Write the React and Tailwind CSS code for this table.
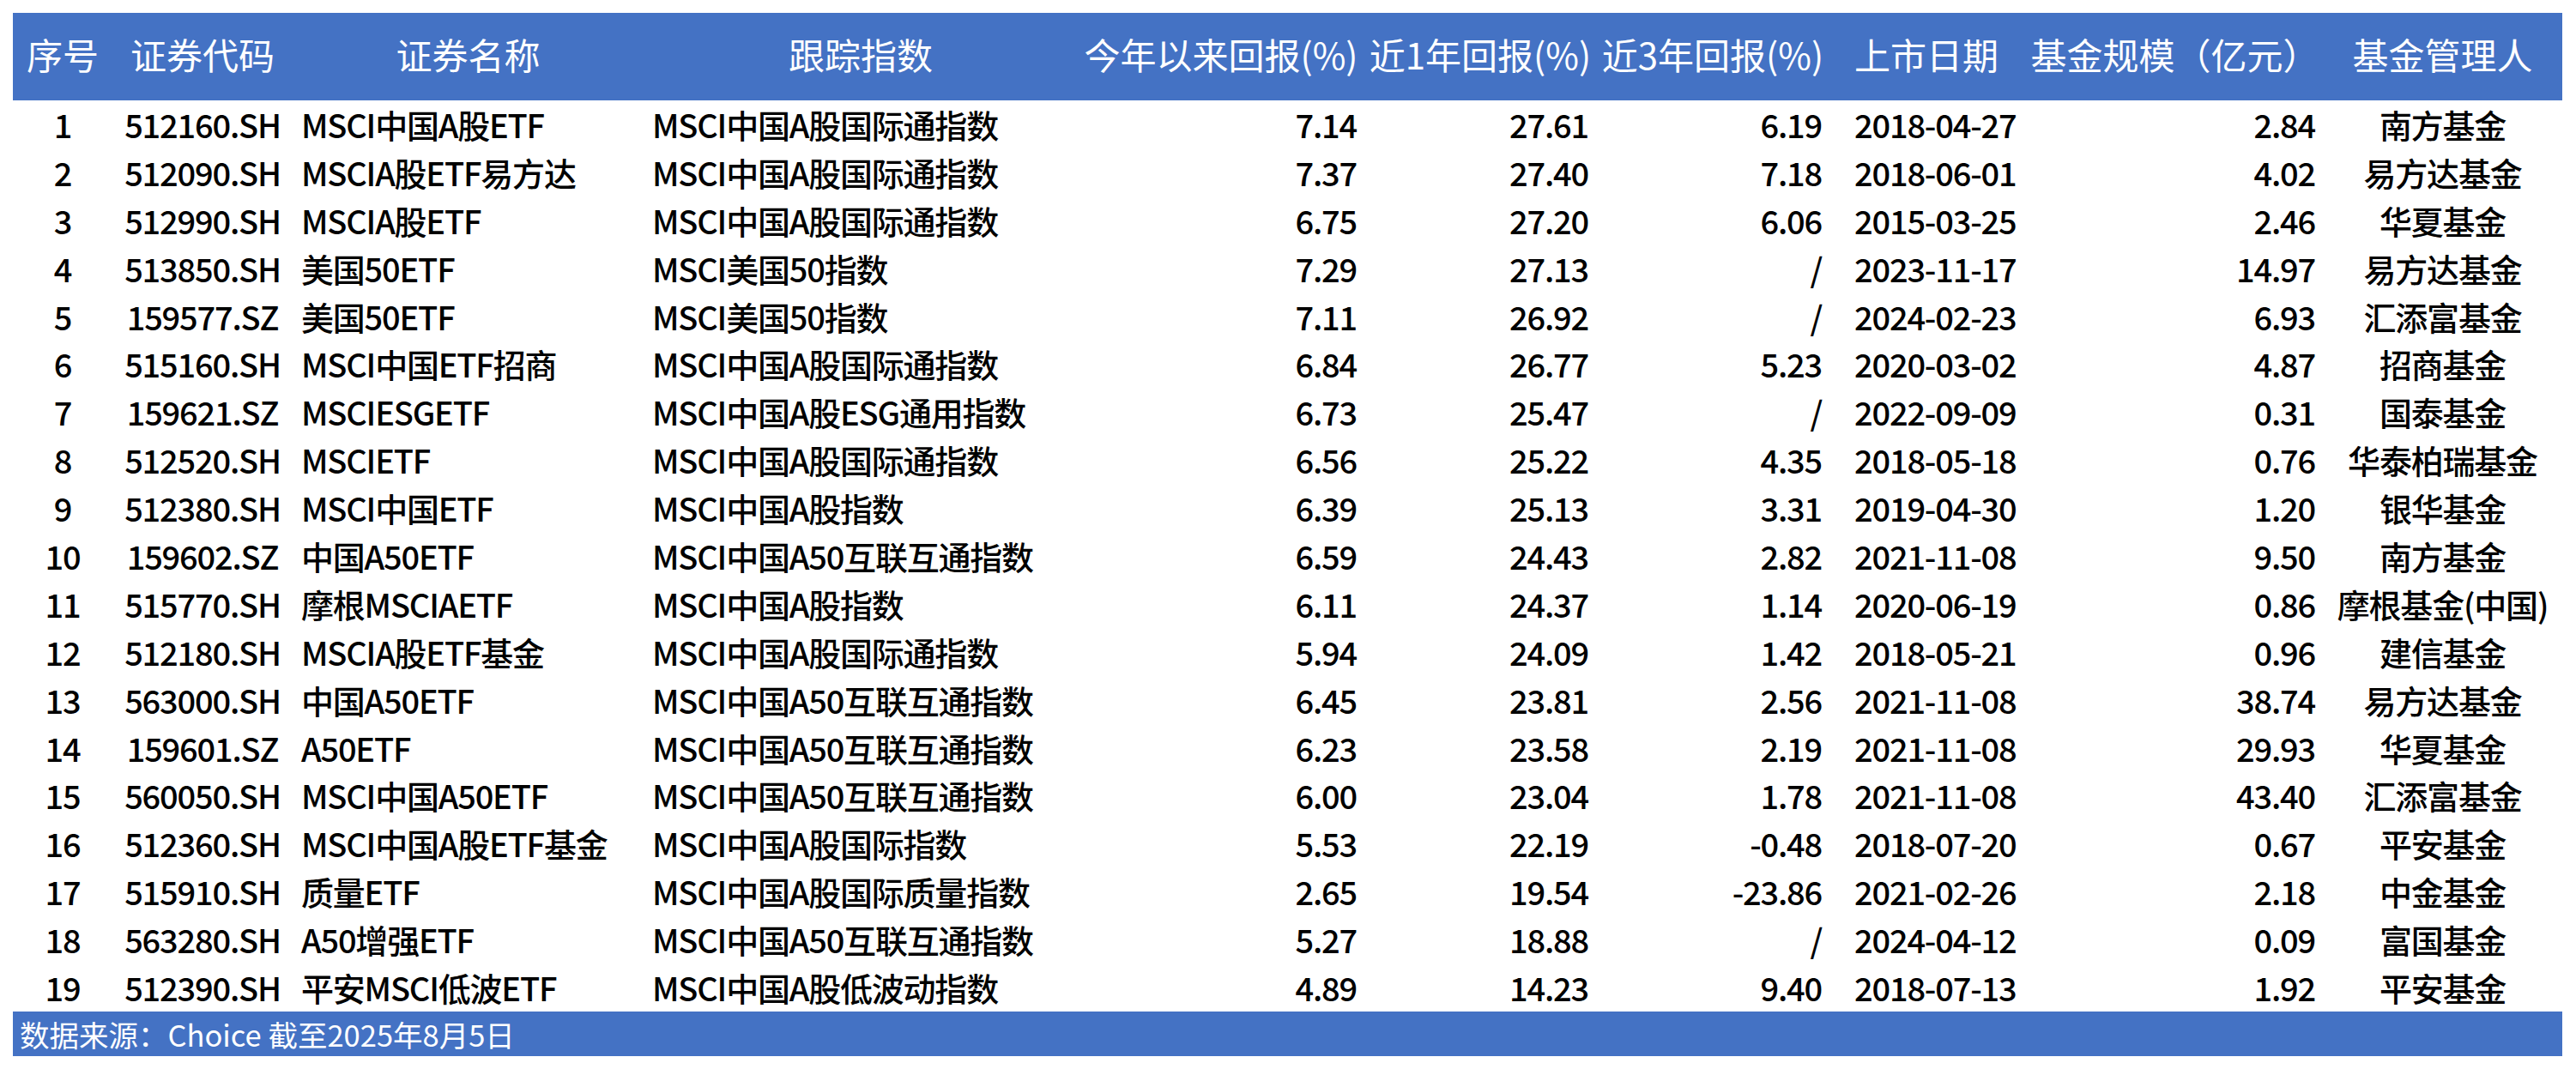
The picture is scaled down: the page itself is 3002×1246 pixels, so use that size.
import React from "react";

const rows = [
  ["1", "512160.SH", "MSCI中国A股ETF", "MSCI中国A股国际通指数", "7.14", "27.61", "6.19", "2018-04-27", "2.84", "南方基金"],
  ["2", "512090.SH", "MSCIA股ETF易方达", "MSCI中国A股国际通指数", "7.37", "27.40", "7.18", "2018-06-01", "4.02", "易方达基金"],
  ["3", "512990.SH", "MSCIA股ETF", "MSCI中国A股国际通指数", "6.75", "27.20", "6.06", "2015-03-25", "2.46", "华夏基金"],
  ["4", "513850.SH", "美国50ETF", "MSCI美国50指数", "7.29", "27.13", "/", "2023-11-17", "14.97", "易方达基金"],
  ["5", "159577.SZ", "美国50ETF", "MSCI美国50指数", "7.11", "26.92", "/", "2024-02-23", "6.93", "汇添富基金"],
  ["6", "515160.SH", "MSCI中国ETF招商", "MSCI中国A股国际通指数", "6.84", "26.77", "5.23", "2020-03-02", "4.87", "招商基金"],
  ["7", "159621.SZ", "MSCIESGETF", "MSCI中国A股ESG通用指数", "6.73", "25.47", "/", "2022-09-09", "0.31", "国泰基金"],
  ["8", "512520.SH", "MSCIETF", "MSCI中国A股国际通指数", "6.56", "25.22", "4.35", "2018-05-18", "0.76", "华泰柏瑞基金"],
  ["9", "512380.SH", "MSCI中国ETF", "MSCI中国A股指数", "6.39", "25.13", "3.31", "2019-04-30", "1.20", "银华基金"],
  ["10", "159602.SZ", "中国A50ETF", "MSCI中国A50互联互通指数", "6.59", "24.43", "2.82", "2021-11-08", "9.50", "南方基金"],
  ["11", "515770.SH", "摩根MSCIAETF", "MSCI中国A股指数", "6.11", "24.37", "1.14", "2020-06-19", "0.86", "摩根基金(中国)"],
  ["12", "512180.SH", "MSCIA股ETF基金", "MSCI中国A股国际通指数", "5.94", "24.09", "1.42", "2018-05-21", "0.96", "建信基金"],
  ["13", "563000.SH", "中国A50ETF", "MSCI中国A50互联互通指数", "6.45", "23.81", "2.56", "2021-11-08", "38.74", "易方达基金"],
  ["14", "159601.SZ", "A50ETF", "MSCI中国A50互联互通指数", "6.23", "23.58", "2.19", "2021-11-08", "29.93", "华夏基金"],
  ["15", "560050.SH", "MSCI中国A50ETF", "MSCI中国A50互联互通指数", "6.00", "23.04", "1.78", "2021-11-08", "43.40", "汇添富基金"],
  ["16", "512360.SH", "MSCI中国A股ETF基金", "MSCI中国A股国际指数", "5.53", "22.19", "-0.48", "2018-07-20", "0.67", "平安基金"],
  ["17", "515910.SH", "质量ETF", "MSCI中国A股国际质量指数", "2.65", "19.54", "-23.86", "2021-02-26", "2.18", "中金基金"],
  ["18", "563280.SH", "A50增强ETF", "MSCI中国A50互联互通指数", "5.27", "18.88", "/", "2024-04-12", "0.09", "富国基金"],
  ["19", "512390.SH", "平安MSCI低波ETF", "MSCI中国A股低波动指数", "4.89", "14.23", "9.40", "2018-07-13", "1.92", "平安基金"],
];

const headers = [
  "序号",
  "证券代码",
  "证券名称",
  "跟踪指数",
  "今年以来回报(%)",
  "近1年回报(%)",
  "近3年回报(%)",
  "上市日期",
  "基金规模（亿元）",
  "基金管理人",
];

const cellCls = [
  "text-center",
  "text-center",
  "text-left pl-[10px]",
  "text-left pl-[10px]",
  "text-right pr-[9px]",
  "text-right pr-[9px]",
  "text-right pr-[9px]",
  "text-left pl-[29px]",
  "text-right pr-[9px]",
  "text-center",
];

const headCls = [
  "text-center",
  "text-center",
  "text-center",
  "text-center",
  "text-center",
  "text-center",
  "text-center",
  "text-left pl-[29px]",
  "text-center",
  "text-center",
];

export default function App() {
  return (
    <div
      className="w-[3002px] h-[1246px] bg-white p-[15px] pr-[16px]"
      style={{ fontFamily: '"Noto Sans CJK SC", "Noto Sans", sans-serif' }}
    >
      <table className="w-[2971px] table-fixed border-collapse">
        <colgroup>
          <col className="w-[116px]" />
          <col className="w-[210px]" />
          <col className="w-[409px]" />
          <col className="w-[506px]" />
          <col className="w-[334px]" />
          <col className="w-[270px]" />
          <col className="w-[272px]" />
          <col className="w-[230px]" />
          <col className="w-[345px]" />
          <col className="w-[279px]" />
        </colgroup>
        <thead>
          <tr className="h-[102px] bg-[#4472c4] text-white text-[42px] leading-none">
            {headers.map((h, i) => (
              <th key={i} className={"font-normal whitespace-nowrap p-0 pb-[6px] " + headCls[i]}>
                {h}
              </th>
            ))}
          </tr>
        </thead>
        <tbody>
          {rows.map((r, ri) => (
            <tr key={ri} className="h-[55.9px] text-black text-[38px] font-medium tracking-[-1.2px] leading-none">
              {r.map((c, ci) => (
                <td key={ci} className={"whitespace-nowrap p-0 " + cellCls[ci]}>
                  {c}
                </td>
              ))}
            </tr>
          ))}
        </tbody>
        <tfoot>
          <tr className="h-[52px] bg-[#4472c4] text-white text-[34.5px] leading-none">
            <td colSpan={10} className="pl-[8px] p-0 whitespace-nowrap">
              数据来源：Choice 截至2025年8月5日
            </td>
          </tr>
        </tfoot>
      </table>
    </div>
  );
}
